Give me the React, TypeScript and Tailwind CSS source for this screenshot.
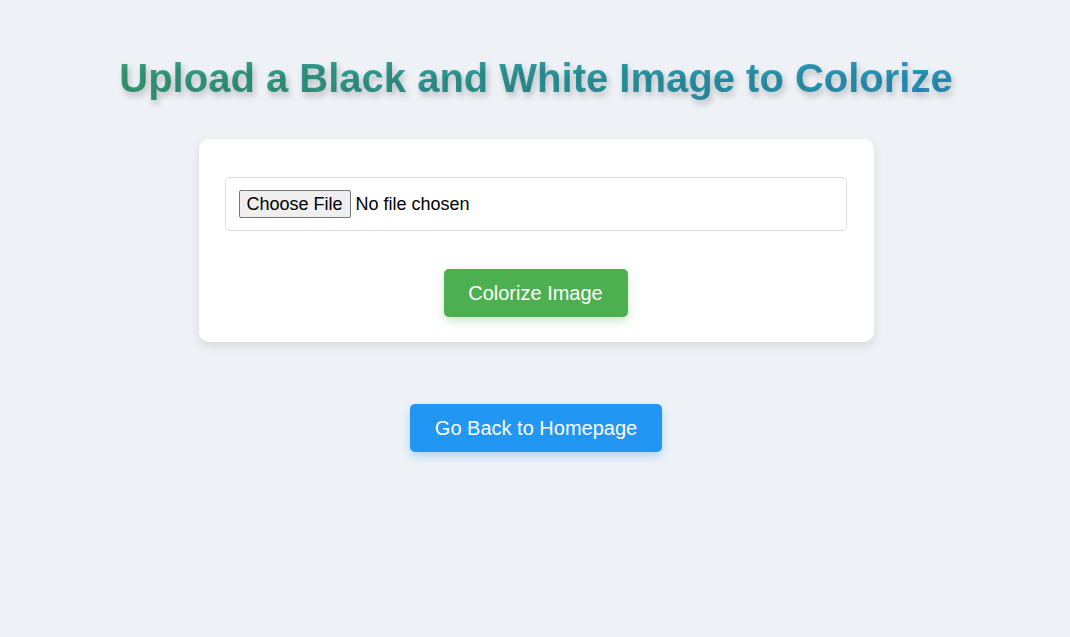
export default function App() {
  return (
    <div className="min-h-[637px] bg-[#eef2f7] pt-[52px] pl-[2px] font-['Liberation_Sans',Arial,sans-serif]">
      <h1 className="text-center text-[40px] font-bold leading-[52px] bg-gradient-to-r from-[#38a07a] to-[#2a98c4] bg-clip-text text-transparent [text-shadow:2px_4px_6px_rgba(0,0,0,0.22)] w-fit mx-auto">
        Upload a Black and White Image to Colorize
      </h1>

      <div className="mx-auto mt-[35px] w-[675px] rounded-[10px] bg-white pl-[26px] pr-[27px] pt-[38px] pb-[25px] shadow-[0_4px_10px_rgba(0,0,0,0.1)]">
        <form className="flex flex-col items-center">
          <div className="w-full rounded-[5px] border border-[#dddddd] px-[13px] py-[12px]">
            <input
              type="file"
              className="block text-[18px] leading-[26px] text-black font-['Liberation_Sans',Arial,sans-serif] file:mr-[5px] file:h-[28px] file:rounded-[2px] file:border file:border-solid file:border-[#767676] file:bg-[#efefef] file:px-[7px] file:text-[18px] file:text-black"
            />
          </div>
          <button
            type="button"
            className="mt-[38px] h-[48px] w-[184px] rounded-[5px] bg-[#4caf50] text-[20px] text-white shadow-[0_4px_10px_rgba(76,175,80,0.3)]"
          >
            Colorize Image
          </button>
        </form>
      </div>

      <div className="mt-[62px] flex justify-center">
        <button
          type="button"
          className="h-[48px] w-[252px] rounded-[5px] bg-[#2196f3] text-[20px] text-white shadow-[0_4px_10px_rgba(33,150,243,0.3)]"
        >
          Go Back to Homepage
        </button>
      </div>
    </div>
  )
}
